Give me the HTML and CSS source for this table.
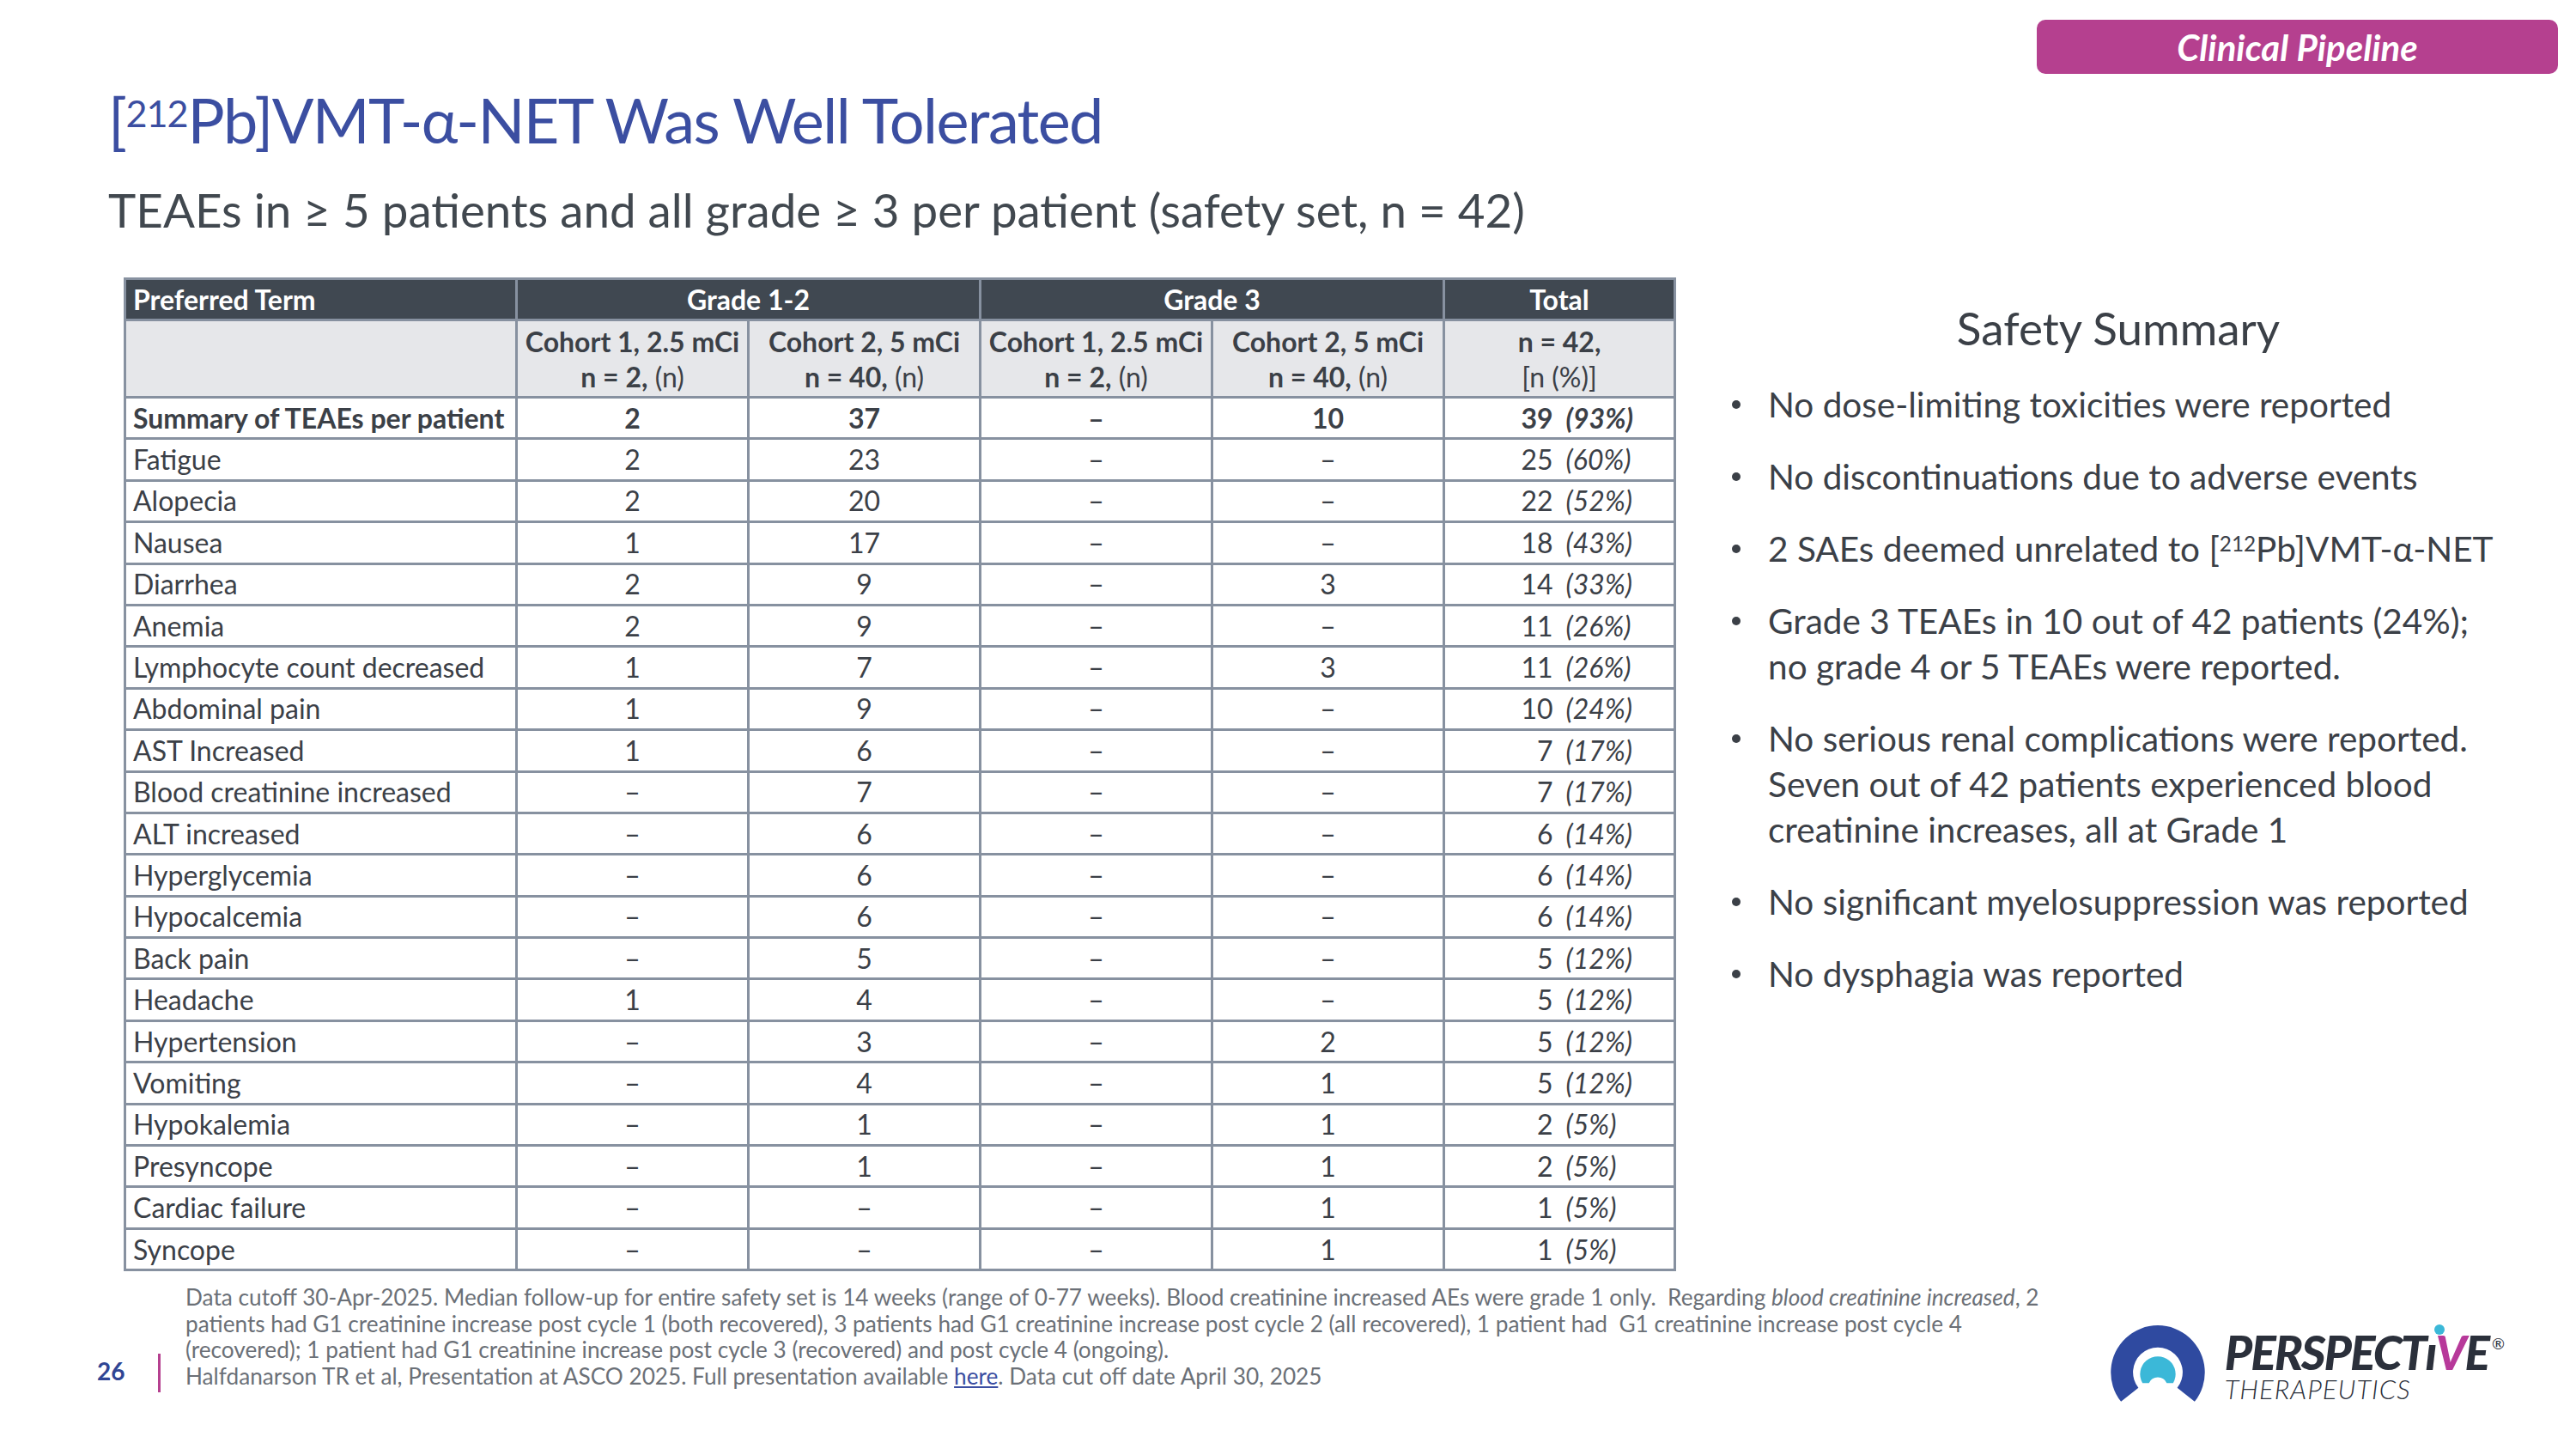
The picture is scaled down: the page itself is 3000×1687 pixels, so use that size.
FILE: index.html
```html
<!DOCTYPE html>
<html lang="en">
<head>
<meta charset="utf-8">
<title>[212Pb]VMT-α-NET Was Well Tolerated</title>
<link rel="stylesheet" href="styles.css">
</head>
<body>
<div class="slide">
  <div class="badge-row"><div class="badge">Clinical Pipeline</div></div>
  <h1 class="title">[<sup>212</sup>Pb]VMT-α-NET Was Well Tolerated</h1>
  <h2 class="subtitle">TEAEs in ≥ 5 patients and all grade ≥ 3 per patient (safety set, n = 42)</h2>

  <div class="main">
    <table class="ae">
      <colgroup>
        <col class="c-term"><col class="c-num"><col class="c-num"><col class="c-num"><col class="c-num"><col class="c-tot">
      </colgroup>
      <thead>
        <tr class="hrow1">
          <th class="term">Preferred Term</th>
          <th colspan="2">Grade 1-2</th>
          <th colspan="2">Grade 3</th>
          <th>Total</th>
        </tr>
        <tr class="hrow2">
          <th></th>
          <th><b>Cohort 1, 2.5 mCi</b><br><b>n = 2,</b> (n)</th>
          <th><b>Cohort 2, 5 mCi</b><br><b>n = 40,</b> (n)</th>
          <th><b>Cohort 1, 2.5 mCi</b><br><b>n = 2,</b> (n)</th>
          <th><b>Cohort 2, 5 mCi</b><br><b>n = 40,</b> (n)</th>
          <th><b>n = 42,</b><br>[n (%)]</th>
        </tr>
      </thead>
      <tbody>
        <tr class="sum"><td class="term">Summary of TEAEs per patient</td><td>2</td><td>37</td><td>–</td><td>10</td><td><div class="tot"><span>39</span><i>(93%)</i></div></td></tr>
        <tr><td class="term">Fatigue</td><td>2</td><td>23</td><td>–</td><td>–</td><td><div class="tot"><span>25</span><i>(60%)</i></div></td></tr>
        <tr><td class="term">Alopecia</td><td>2</td><td>20</td><td>–</td><td>–</td><td><div class="tot"><span>22</span><i>(52%)</i></div></td></tr>
        <tr><td class="term">Nausea</td><td>1</td><td>17</td><td>–</td><td>–</td><td><div class="tot"><span>18</span><i>(43%)</i></div></td></tr>
        <tr><td class="term">Diarrhea</td><td>2</td><td>9</td><td>–</td><td>3</td><td><div class="tot"><span>14</span><i>(33%)</i></div></td></tr>
        <tr><td class="term">Anemia</td><td>2</td><td>9</td><td>–</td><td>–</td><td><div class="tot"><span>11</span><i>(26%)</i></div></td></tr>
        <tr><td class="term">Lymphocyte count decreased</td><td>1</td><td>7</td><td>–</td><td>3</td><td><div class="tot"><span>11</span><i>(26%)</i></div></td></tr>
        <tr><td class="term">Abdominal pain</td><td>1</td><td>9</td><td>–</td><td>–</td><td><div class="tot"><span>10</span><i>(24%)</i></div></td></tr>
        <tr><td class="term">AST Increased</td><td>1</td><td>6</td><td>–</td><td>–</td><td><div class="tot"><span>7</span><i>(17%)</i></div></td></tr>
        <tr><td class="term">Blood creatinine increased</td><td>–</td><td>7</td><td>–</td><td>–</td><td><div class="tot"><span>7</span><i>(17%)</i></div></td></tr>
        <tr><td class="term">ALT increased</td><td>–</td><td>6</td><td>–</td><td>–</td><td><div class="tot"><span>6</span><i>(14%)</i></div></td></tr>
        <tr><td class="term">Hyperglycemia</td><td>–</td><td>6</td><td>–</td><td>–</td><td><div class="tot"><span>6</span><i>(14%)</i></div></td></tr>
        <tr><td class="term">Hypocalcemia</td><td>–</td><td>6</td><td>–</td><td>–</td><td><div class="tot"><span>6</span><i>(14%)</i></div></td></tr>
        <tr><td class="term">Back pain</td><td>–</td><td>5</td><td>–</td><td>–</td><td><div class="tot"><span>5</span><i>(12%)</i></div></td></tr>
        <tr><td class="term">Headache</td><td>1</td><td>4</td><td>–</td><td>–</td><td><div class="tot"><span>5</span><i>(12%)</i></div></td></tr>
        <tr><td class="term">Hypertension</td><td>–</td><td>3</td><td>–</td><td>2</td><td><div class="tot"><span>5</span><i>(12%)</i></div></td></tr>
        <tr><td class="term">Vomiting</td><td>–</td><td>4</td><td>–</td><td>1</td><td><div class="tot"><span>5</span><i>(12%)</i></div></td></tr>
        <tr><td class="term">Hypokalemia</td><td>–</td><td>1</td><td>–</td><td>1</td><td><div class="tot"><span>2</span><i>(5%)</i></div></td></tr>
        <tr><td class="term">Presyncope</td><td>–</td><td>1</td><td>–</td><td>1</td><td><div class="tot"><span>2</span><i>(5%)</i></div></td></tr>
        <tr><td class="term">Cardiac failure</td><td>–</td><td>–</td><td>–</td><td>1</td><td><div class="tot"><span>1</span><i>(5%)</i></div></td></tr>
        <tr><td class="term">Syncope</td><td>–</td><td>–</td><td>–</td><td>1</td><td><div class="tot"><span>1</span><i>(5%)</i></div></td></tr>
      </tbody>
    </table>

    <aside class="summary">
      <h3 class="summary-title">Safety Summary</h3>
      <ul class="bullets">
        <li>No dose-limiting toxicities were reported</li>
        <li>No discontinuations due to adverse events</li>
        <li>2 SAEs deemed unrelated to [<sup>212</sup>Pb]VMT-α-NET</li>
        <li>Grade 3 TEAEs in 10 out of 42 patients (24%);<br>no grade 4 or 5 TEAEs were reported.</li>
        <li>No serious renal complications were reported.<br>Seven out of 42 patients experienced blood<br>creatinine increases, all at Grade 1</li>
        <li>No significant myelosuppression was reported</li>
        <li>No dysphagia was reported</li>
      </ul>
    </aside>
  </div>

  <footer class="footer">
    <div class="pagenum">26</div>
    <div class="pagebar"></div>
    <p class="notes">Data cutoff 30-Apr-2025. Median follow-up for entire safety set is 14 weeks (range of 0-77 weeks). Blood creatinine increased AEs were grade 1 only.&nbsp; Regarding <i>blood creatinine increased</i>, 2<br>patients had G1 creatinine increase post cycle 1 (both recovered), 3 patients had G1 creatinine increase post cycle 2 (all recovered), 1 patient had&nbsp; G1 creatinine increase post cycle 4<br>(recovered); 1 patient had G1 creatinine increase post cycle 3 (recovered) and post cycle 4 (ongoing).<br>Halfdanarson TR et al, Presentation at ASCO 2025. Full presentation available <a class="link">here</a>. Data cut off date April 30, 2025</p>
    <div class="logo">
      <svg class="logo-mark" width="116" height="95" viewBox="0 0 112 92" aria-hidden="true">
        <path d="M14.5 88 A53 53 0 1 1 97.5 88 L77.9 72.4 A28 28 0 1 0 34.1 72.4 Z" fill="#2f4aa0"/>
        <path d="M38.7 67 A20 20 0 1 1 73.3 67 L66 67 A11 11 0 0 0 46 67 Z" fill="#3bb8d8"/>
      </svg>
      <div class="logo-text">
        <div class="wordmark">PERSPECT<span class="idot">ı</span><span class="vee">V</span>E<sup class="reg">®</sup></div>
        <div class="subword">THERAPEUTICS</div>
      </div>
    </div>
  </footer>
</div>
</body>
</html>
```

FILE: styles.css
```css
* { box-sizing: border-box; margin: 0; padding: 0; }
html, body { background: #ffffff; }
body { font-family: Lato, "Open Sans", sans-serif; color: #3b4047; }

.slide { width: 3000px; height: 1687px; position: relative; overflow: hidden; background: #fff; }

/* top badge */
.badge-row { display: flex; justify-content: flex-end; padding: 23px 21px 0 0; }
.badge {
  width: 607px; height: 63px; border-radius: 10px;
  background: #b5408f; color: #fff;
  font-weight: 700; font-style: italic; font-size: 42px;
  display: flex; align-items: center; justify-content: center;
}

/* headings */
.title {
  margin: 8px 0 0 126px;
  font-weight: 400; font-size: 72px; line-height: 90px;
  color: #3b4ea1; letter-spacing: -1.6px;
}
.title sup { font-size: 0.6em; line-height: 0; vertical-align: 0.45em; letter-spacing: -1px; }
.subtitle {
  margin: 30px 0 0 126px;
  font-weight: 400; font-size: 54.7px; line-height: 61px;
  color: #41484f;
}

/* main area */
.main { display: flex; align-items: flex-start; margin-top: 48px; padding-left: 144px; }

.ae {
  width: 1805px; table-layout: fixed; border-collapse: collapse;
  font-size: 32px; color: #3b4047;
  border: 3px solid #8791a0;
}
.c-term { width: 456px; }
.c-num { width: 270px; }
.c-tot { width: 269px; }
.ae th, .ae td { border: 3px solid #8791a0; text-align: center; padding: 0 8px; }
.ae .term { text-align: left; }
.hrow1 { height: 48px; }
.hrow1 th { background: #404851; color: #ffffff; font-weight: 700; line-height: 36px; }
.hrow2 { height: 90px; }
.hrow2 th { background: #e6e7ea; font-weight: 400; line-height: 41px; color: #3b4047; }
.hrow2 b { font-weight: 700; }
.ae tbody tr { height: 48.4px; }
.ae td { line-height: 36px; white-space: nowrap; }
.sum td { font-weight: 700; }
.tot { display: grid; grid-template-columns: 1fr 1fr; column-gap: 15px; }
.tot span { text-align: right; }
.tot i { text-align: left; font-style: italic; }

/* right summary */
.summary { width: 908px; margin-left: 61px; padding-top: 28px; }
.summary-title {
  font-weight: 400; font-size: 53px; line-height: 61px;
  text-align: center; color: #3b4047;
}
.bullets { list-style: none; margin-top: 32px; padding-left: 10px; }
.bullets li {
  position: relative; padding-left: 36px;
  font-size: 40.5px; line-height: 53px; color: #3b4047;
  margin-bottom: 31px;
}
.bullets li::before {
  content: ""; position: absolute; left: -6px; top: 22px;
  width: 10px; height: 10px; border-radius: 50%; background: #3b4047;
}
.bullets sup { font-size: 0.6em; line-height: 0; vertical-align: 0.5em; }

/* footer */
.footer { display: flex; align-items: flex-start; margin-top: 15px; padding-left: 113px; padding-right: 83px; }
.pagenum { width: 40px; margin-top: 86px; font-size: 28px; font-weight: 700; line-height: 30px; color: #2f4594; }
.pagebar { width: 3px; height: 45px; margin-top: 81px; margin-left: 31px; background: #b5408f; }
.notes { margin-left: 29px; font-size: 26.2px; line-height: 30.6px; color: #6b7077; white-space: nowrap; }
.link { color: #3b4ea1; text-decoration: underline; }

.logo { margin-left: auto; margin-top: 46px; display: flex; align-items: flex-start; }
.logo-mark { display: block; }
.logo-text { margin-left: 20px; margin-top: 10px; }
.wordmark {
  font-size: 55px; font-weight: 900; font-style: italic; line-height: 46px;
  color: #2b303b; letter-spacing: -2px; white-space: nowrap;
}
.idot { position: relative; }
.idot::before {
  content: ""; position: absolute; left: 10px; top: 1px;
  width: 12px; height: 12px; border-radius: 50%; background: #3bb8d8;
}
.vee { color: #b7399a; }
.reg { font-size: 18px; font-weight: 400; font-style: normal; vertical-align: 24px; line-height: 0; margin-left: 4px; letter-spacing: 0; }
.subword {
  margin-top: 4px;
  font-size: 31px; font-weight: 300; font-style: italic; line-height: 32px;
  color: #2b303b; letter-spacing: 1px;
}
```
